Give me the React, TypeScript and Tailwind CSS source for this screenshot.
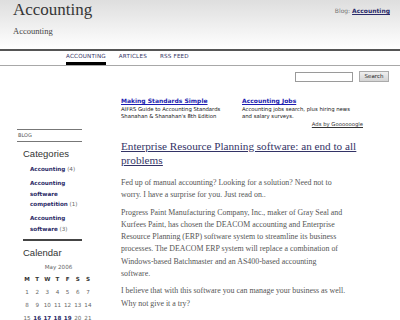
const serif = { fontFamily: '"Liberation Serif", "Times New Roman", serif' }
const verdana = { fontFamily: '"DejaVu Sans", Verdana, sans-serif' }
const arial = { fontFamily: '"Liberation Sans", Arial, sans-serif' }

const weeks = [
  [1, 2, 3, 4, 5, 6, 7],
  [8, 9, 10, 11, 12, 13, 14],
  [15, 16, 17, 18, 19, 20, 21],
]
const linked = [16, 17, 18, 19]

export default function App() {
  return (
    <div className="w-[400px] h-[320px] overflow-hidden bg-white">
      {/* header */}
      <header className="h-[49px] bg-gradient-to-b from-[#dedede] to-white flex justify-between">
        <div className="pl-[13px]">
          <h1 className="text-[17px] leading-[20px] text-[#363636] pt-0" style={serif}>
            Accounting
          </h1>
          <p className="text-[8.5px] leading-[10px] text-[#444] mt-[6px]" style={serif}>
            Accounting
          </p>
        </div>
        <div className="pr-[10px] pt-[7px] text-[6px] leading-[8px] text-[#777]" style={verdana}>
          Blog:{' '}
          <a href="#" className="font-bold text-[#2a2a6a] underline">
            Accounting
          </a>
        </div>
      </header>

      {/* nav */}
      <nav className="h-[17px] border-t-2 border-b border-t-[#555] border-b-[#a8a8a8] flex items-end pl-[66px] gap-[13px]" style={verdana}>
        <a href="#" className="text-[5.6px] leading-[8px] pb-[2px] text-[#333366] border-b-[3px] border-black tracking-[0.2px]">
          ACCOUNTING
        </a>
        <a href="#" className="text-[5.6px] leading-[8px] pb-[5px] text-[#333366] tracking-[0.2px]">
          ARTICLES
        </a>
        <a href="#" className="text-[5.6px] leading-[8px] pb-[5px] text-[#333366] tracking-[0.2px]">
          RSS FEED
        </a>
      </nav>

      {/* search */}
      <div className="flex justify-end items-center gap-[6px] pr-[11px] mt-[5px]">
        <input className="w-[58px] h-[10px] border border-[#9a9a9a] bg-white" />
        <button className="w-[30px] h-[11px] border border-[#aaa] bg-gradient-to-b from-[#f0f0f0] to-[#d4d4d4] text-[5.5px] leading-[9px] text-[#222]" style={verdana}>
          Search
        </button>
      </div>

      <div className="flex items-start">
        {/* sidebar */}
        <aside className="w-[65px] ml-[17px] mt-[47px] shrink-0">
          <div className="border-t border-b border-[#777] h-[13px] flex items-center pl-[1px] text-[5px] text-[#555]" style={verdana}>
            BLOG
          </div>
          <div className="pl-[6px]">
            <h2 className="text-[9.5px] leading-[12px] text-[#333] mt-[6px]" style={arial}>
              Categories
            </h2>
            <ul className="pl-[7px] mt-[4px] flex flex-col gap-[3.5px] text-[5.6px] leading-[10.5px]" style={verdana}>
              <li>
                <a href="#" className="font-bold text-[#2a2a66]">Accounting</a> <span className="text-[#666]">(4)</span>
              </li>
              <li>
                <a href="#" className="font-bold text-[#2a2a66]">Accounting software competition</a> <span className="text-[#666]">(1)</span>
              </li>
              <li>
                <a href="#" className="font-bold text-[#2a2a66]">Accounting software</a> <span className="text-[#666]">(3)</span>
              </li>
            </ul>
            <div className="border-t-2 border-[#444] mt-[5px]" />
            <h2 className="text-[9.5px] leading-[12px] text-[#333] mt-[6px]" style={arial}>
              Calendar
            </h2>
            <div className="w-[71px] -ml-[1px] mt-[2px] text-[5.6px] text-[#666]" style={verdana}>
              <div className="text-center leading-[12px] pl-[2px]">May 2006</div>
              <div className="grid grid-cols-7 leading-[13px] text-center font-bold text-[#333]">
                {['M', 'T', 'W', 'T', 'F', 'S', 'S'].map((d, i) => (
                  <span key={i}>{d}</span>
                ))}
              </div>
              {weeks.map((w, i) => (
                <div key={i} className="grid grid-cols-7 leading-[13px] text-center">
                  {w.map((d) =>
                    linked.includes(d) ? (
                      <a key={d} href="#" className="font-bold text-[#2a2a66]">{d}</a>
                    ) : (
                      <span key={d}>{d}</span>
                    ),
                  )}
                </div>
              ))}
            </div>
          </div>
        </aside>

        {/* main */}
        <main className="ml-[39px] w-[272px] mt-[15px]">
          <div className="w-[242px]" style={verdana}>
            <div className="grid grid-cols-2">
              <div>
                <a href="#" className="text-[6px] leading-[8px] font-bold text-[#1c1cb0] underline block">
                  Making Standards Simple
                </a>
                <p className="text-[5.3px] leading-[7px] text-[#111] mt-[1px]">
                  AIFRS Guide to Accounting Standards
                  <br />
                  Shanahan &amp; Shanahan's 8th Edition
                </p>
              </div>
              <div>
                <a href="#" className="text-[6px] leading-[8px] font-bold text-[#1c1cb0] underline block">
                  Accounting Jobs
                </a>
                <p className="text-[5.3px] leading-[7px] text-[#111] mt-[1px]">
                  Accounting jobs search, plus hiring news
                  <br />
                  and salary surveys.
                </p>
              </div>
            </div>
            <div className="text-right text-[5.3px] leading-[8px] text-[#333] underline">Ads by Goooooogle</div>
          </div>

          <h2 className="text-[11.2px] leading-[13.5px] text-[#333366] underline mt-[12px]" style={serif}>
            <a href="#">
              Enterprise Resource Planning software: an end to all
              <br />
              problems
            </a>
          </h2>
          <div className="text-[7.9px] leading-[12.3px] text-[#555] mt-[10px] flex flex-col gap-[5px]" style={serif}>
            <p>
              Fed up of manual accounting? Looking for a solution? Need not to
              <br />
              worry. I have a surprise for you. Just read on..
            </p>
            <p>
              Progress Paint Manufacturing Company, Inc., maker of Gray Seal and
              <br />
              Kurfees Paint, has chosen the DEACOM accounting and Enterprise
              <br />
              Resource Planning (ERP) software system to streamline its business
              <br />
              processes. The DEACOM ERP system will replace a combination of
              <br />
              Windows-based Batchmaster and an AS400-based accounting
              <br />
              software.
            </p>
            <p>
              I believe that with this software you can manage your business as well.
              <br />
              Why not give it a try?
            </p>
          </div>
        </main>
      </div>
    </div>
  )
}
